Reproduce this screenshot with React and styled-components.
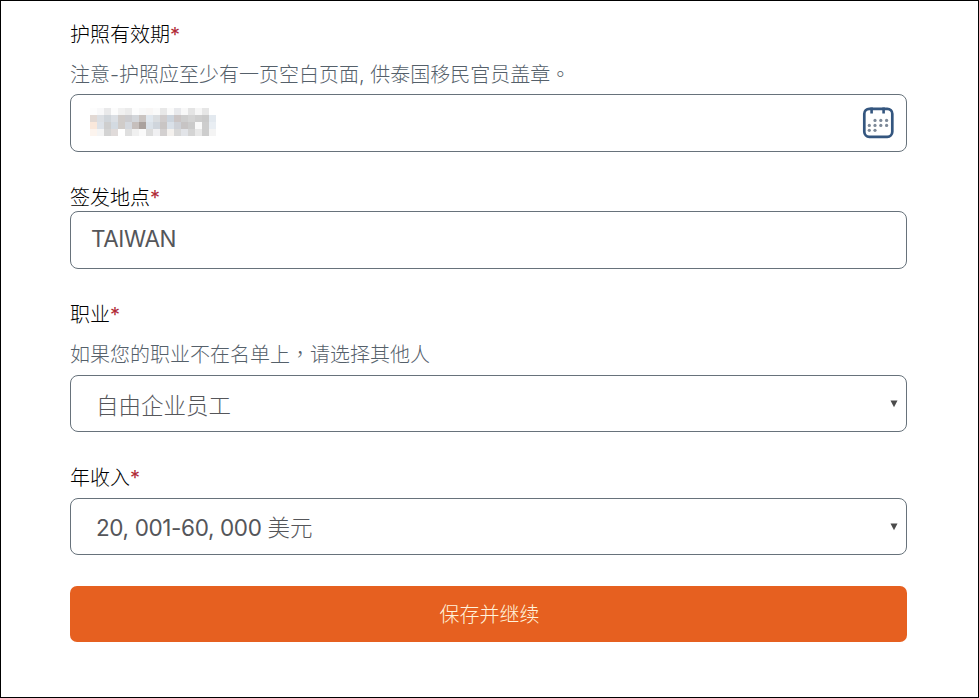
import React from "react";
import styled, { createGlobalStyle } from "styled-components";

const Global = createGlobalStyle`
  *, *::before, *::after { box-sizing: border-box; }
  body { margin: 0; background: #fff; }
`;

const Page = styled.main`
  width: 979px;
  height: 698px;
  border: 1px solid #000;
  padding: 0 71px 0 69px;
  overflow: hidden;
  background: #fff;
  font-family: Inter, "Noto Sans CJK SC", sans-serif;
  font-weight: 300;
`;

const Form = styled.form`
  display: flex;
  flex-direction: column;
`;

const Field = styled.div`
  display: flex;
  flex-direction: column;
  padding-top: ${(p) => p.$gap}px;
`;

const Label = styled.label`
  height: ${(p) => p.$height}px;
  line-height: 28px;
  font-size: 20px;
  color: #000;
`;

const Required = styled.span`
  font-weight: 400;
  color: #b02a38;
`;

const Hint = styled.p`
  margin: 0;
  height: ${(p) => p.$height}px;
  line-height: 28px;
  font-size: 20px;
  color: #55606a;
  white-space: nowrap;
`;

const CenteredMark = styled.span`
  font-family: "Noto Sans CJK TC", sans-serif;
`;

const Control = styled.div`
  display: flex;
  align-items: center;
  justify-content: space-between;
  height: ${(p) => p.$height}px;
  border: 1px solid #67727b;
  border-radius: 8px;
  padding: 0 ${(p) => p.$right}px 0 ${(p) => p.$left}px;
`;

const Value = styled.span`
  font-size: 22.5px;
  line-height: 30px;
  font-weight: ${(p) => p.$weight || 300};
  color: #55565a;
  letter-spacing: ${(p) => p.$tracking || 0}px;
  margin-top: ${(p) => p.$shift || 0}px;
  white-space: pre;
`;

const Cjk = styled.span`
  font-weight: 300;
  letter-spacing: 0;
`;

const Mosaic = styled.div`
  display: grid;
  grid-template-columns: repeat(18, 7px);
  grid-auto-rows: 7px;
  margin-top: -2px;
`;

const Tile = styled.i`
  background: ${(p) => p.$color};
`;

const Submit = styled.button`
  margin-top: 31px;
  height: 56px;
  padding: 2px 0 0 2px;
  border: 0;
  border-radius: 7px;
  background: #e66020;
  color: #fff3dc;
  font: 300 20px/28px Inter, "Noto Sans CJK SC", sans-serif;
`;

const tiles = `
fdfdfd f8f8f9 e9e9ea fcfcfc f1f1f1 ebebeb fdfdfd f8f8f8 f8f6f5 fafafa e8e8e8 fafafa e8e9ec f8f8f8 e4e4e4 f6f6f6 e6e6e6 ffffff
e2d9d4 dcdfe3 d0d5da dbdfe4 d0ccca cccccf d3d6da cac4c1 e0e7ee dadde0 d0cccc ccd4dd cbc5c5 cecece d4d4d4 cecece cacaca e3e9ef
fae8db dde2e8 cecece d3dae1 d0ccc9 d4d8de c6bfbc aaa19d dae1e8 cfd5dc c9c5c4 d9e0e8 ced1d7 c7c4c4 cbcbcb fafafa cdcdcd e9eef3
fcf4ee f4f4f4 d3d3d3 e0dbda ffffff dfdfdf f0f0f0 fafafa dddddd f0f0f2 d3d0d0 f4f1ee d8d8d8 e2e4e8 d4d4d4 e8e8e8 cdcdcd f4f4f4
`.trim().split(/\s+/);

function RedactedDate() {
  return (
    <Mosaic>
      {tiles.map((c, i) => <Tile key={i} $color={`#${c}`} />)}
    </Mosaic>
  );
}

function CalendarIcon() {
  const dots = [[13, 13.4], [18.8, 13.4], [24.6, 13.4], [7.3, 18.4], [13, 18.4], [18.8, 18.4], [24.6, 18.4], [7.3, 23.3], [13, 23.3]];
  return (
    <svg width="32" height="32" viewBox="0 0 32 32" fill="none">
      <rect x="2.3" y="1.8" width="28" height="28" rx="5" stroke="#34567f" strokeWidth="2.7" />
      <path d="M9.6 0.5v6M21.6 0.5v6" stroke="#34567f" strokeWidth="2.6" />
      {dots.map(([x, y]) => (
        <circle key={`${x}-${y}`} cx={x} cy={y} r="1.6" fill="#7d8998" />
      ))}
    </svg>
  );
}

function Caret() {
  return (
    <svg width="8" height="8" viewBox="0 0 8 8">
      <path d="M0.5 0.5h7L4 7.2z" fill="#4b4b4b" />
    </svg>
  );
}

export default function App() {
  return (
    <>
      <Global />
      <Page>
        <Form>
          <Field $gap={20}>
            <Label $height={39}>护照有效期<Required>*</Required></Label>
            <Hint $height={34}>注意-护照应至少有一页空白页面, 供泰国移民官员盖章<CenteredMark lang="zh-TW">。</CenteredMark></Hint>
            <Control $height={58} $left={19} $right={12}>
              <RedactedDate />
              <CalendarIcon />
            </Control>
          </Field>
          <Field $gap={32}>
            <Label $height={27}>签发地点<Required>*</Required></Label>
            <Control $height={58} $left={20} $right={12}>
              <Value $weight={400} $shift={-2} $tracking={-0.4}>TAIWAN</Value>
            </Control>
          </Field>
          <Field $gap={32}>
            <Label $height={39}>职业<Required>*</Required></Label>
            <Hint $height={35}>如果您的职业不在名单上<CenteredMark lang="zh-TW">，</CenteredMark>请选择其他人</Hint>
            <Control $height={57} $left={25} $right={8}>
              <Value $shift={5}>自由企业员工</Value>
              <Caret />
            </Control>
          </Field>
          <Field $gap={32}>
            <Label $height={34}>年收入<Required>*</Required></Label>
            <Control $height={57} $left={25} $right={8}>
              <Value $weight={400} $shift={2} $tracking={-0.37}>20, 001-60, 000 <Cjk>美元</Cjk></Value>
              <Caret />
            </Control>
          </Field>
          <Submit type="button">保存并继续</Submit>
        </Form>
      </Page>
    </>
  );
}
